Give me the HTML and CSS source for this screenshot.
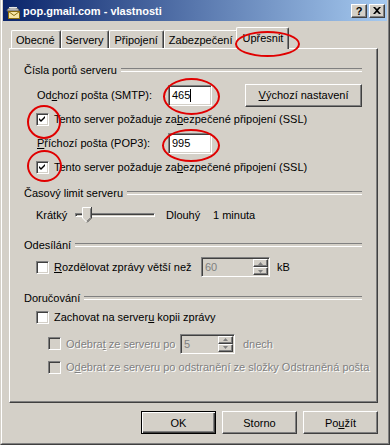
FILE: index.html
```html
<!DOCTYPE html>
<html>
<head>
    <meta charset="UTF-8">
    <title>pop.gmail.com - vlastnosti</title>
    <link rel="stylesheet" href="styles.css">
</head>
<body>
<div class="window">
    <div class="frame">
        <!-- titulek okna -->
        <div class="titlebar">
            <svg class="app-icon" width="16" height="16" viewBox="0 0 16 16">
                <path d="M2 8 C2 3 14 3 14 8 Z" fill="#b8b8b8" stroke="#6a6a6a"/>
                <path d="M4 4.5 H12" stroke="#e8e8e8"/>
                <rect x="3.5" y="8.5" width="11" height="7" fill="#f6e7a6" stroke="#8a6d10"/>
                <path d="M3.5 8.5 L9 12.5 L14.5 8.5" fill="none" stroke="#8a6d10"/>
            </svg>
            <span class="title">pop.gmail.com - vlastnosti</span>
            <span class="caption-btns">
                <span class="cbtn">?</span>
                <span class="cbtn">
                    <svg width="8" height="7" viewBox="0 0 8 7">
                        <path d="M0 0 L2 0 L4 2 L6 0 L8 0 L5 3.5 L8 7 L6 7 L4 5 L2 7 L0 7 L3 3.5 Z" fill="#000"/>
                    </svg>
                </span>
            </span>
        </div>

        <div class="content">
            <!-- zalozky -->
            <div class="tabs">
                <div class="tab">Obecné</div>
                <div class="tab">Servery</div>
                <div class="tab">Připojení</div>
                <div class="tab">Zabezpečení</div>
                <div class="tab active mark mark-tab">Upřesnit</div>
            </div>

            <div class="panel">
                <div class="group ports">
                    <div class="group-title">Čísla portů serveru</div>
                    <div class="row">
                        <span class="port-label">Od<u>c</u>hozí pošta (SMTP):</span>
                        <span class="mark mark-smtp"><span class="edit">465<i class="caret"></i></span></span>
                        <button class="btn defaults"><u>V</u>ýchozí nastavení</button>
                    </div>
                    <div class="row">
                        <span class="check checked mark mark-cb1"><svg width="9" height="9" viewBox="0 0 9 9"><path d="M1 3 L3 5 L7 1 L7 3 L3 7 L1 5 Z"/></svg></span>
                        <span class="cb-text">Tento server požaduje za<u>b</u>ezpečené připojení (SSL)</span>
                    </div>
                    <div class="row">
                        <span class="port-label"><u>P</u>říchozí pošta (POP3):</span>
                        <span class="mark mark-pop"><span class="edit">995</span></span>
                    </div>
                    <div class="row">
                        <span class="check checked mark mark-cb2"><svg width="9" height="9" viewBox="0 0 9 9"><path d="M1 3 L3 5 L7 1 L7 3 L3 7 L1 5 Z"/></svg></span>
                        <span class="cb-text">Tento server požaduje za<u>b</u>ezpečené připojení (SSL)</span>
                    </div>
                </div>

                <div class="group timeout">
                    <div class="group-title">Časový limit serveru</div>
                    <div class="row">
                        <span class="short-label">Krátký</span>
                        <span class="slider">
                            <span class="track"></span>
                            <svg class="thumb" width="10" height="16" viewBox="0 0 10 16">
                                <path d="M0.5 0.5 H9.5 V11 L5 15.5 L0.5 11 Z" fill="#d4d0c8"/>
                                <path d="M0.5 11 V0.5 H9" fill="none" stroke="#fff"/>
                                <path d="M0.5 11 L5 15.5" fill="none" stroke="#fff"/>
                                <path d="M9.5 0 V11 L5 15.5" fill="none" stroke="#404040"/>
                                <path d="M8.5 1.5 V10.6 L5 14.1" fill="none" stroke="#808080"/>
                            </svg>
                        </span>
                        <span class="long-label">Dlouhý</span>
                        <span>1 minuta</span>
                    </div>
                </div>

                <div class="group sending">
                    <div class="group-title">Odesílání</div>
                    <div class="row">
                        <span class="check"></span>
                        <span class="cb-text split"><u>R</u>ozdělovat zprávy větší než</span>
                        <span class="spin wide">
                            <span class="spin-value">60</span>
                            <span class="spin-btns">
                                <span class="sbtn"><svg width="5" height="3" viewBox="0 0 5 3"><path d="M2.5 0 L5 3 H0 Z" fill="#808080"/></svg></span>
                                <span class="sbtn"><svg width="5" height="3" viewBox="0 0 5 3"><path d="M0 0 H5 L2.5 3 Z" fill="#808080"/></svg></span>
                            </span>
                        </span>
                        <span class="unit">kB</span>
                    </div>
                </div>

                <div class="group delivery">
                    <div class="group-title">Doručování</div>
                    <div class="row">
                        <span class="check"></span>
                        <span class="cb-text">Zachovat na server<u>u</u> kopii zprávy</span>
                    </div>
                    <div class="row sub short">
                        <span class="check disabled"></span>
                        <span class="cb-text off days">Odebra<u>t</u> ze serveru po</span>
                        <span class="spin narrow">
                            <span class="spin-value">5</span>
                            <span class="spin-btns">
                                <span class="sbtn"><svg width="5" height="3" viewBox="0 0 5 3"><path d="M2.5 0 L5 3 H0 Z" fill="#808080"/></svg></span>
                                <span class="sbtn"><svg width="5" height="3" viewBox="0 0 5 3"><path d="M0 0 H5 L2.5 3 Z" fill="#808080"/></svg></span>
                            </span>
                        </span>
                        <span class="unit off">dnech</span>
                    </div>
                    <div class="row sub">
                        <span class="check disabled"></span>
                        <span class="cb-text off">O<u>d</u>ebrat ze serveru po odstranění ze složky Odstraněná pošta</span>
                    </div>
                </div>
            </div>

            <!-- tlacitka dole -->
            <div class="actions">
                <button class="btn default">OK</button>
                <button class="btn">Storno</button>
                <button class="btn">Po<u>u</u>žít</button>
            </div>
        </div>
    </div>
</div>
</body>
</html>
```

FILE: styles.css
```css
* {
    margin: 0;
    padding: 0;
    box-sizing: border-box;
}

body {
    font: 11px "Liberation Sans", Arial, sans-serif;
    color: #000;
    background-color: #d4d0c8;
}

/*okno s klasickym 3D okrajem*/
.window {
    width: 390px;
    height: 445px;
    background-color: #d4d0c8;
    border-style: solid;
    border-width: 0 1px 1px 1px;
    border-color: #d4d0c8 #404040 #404040 #d4d0c8;
}

.frame {
    height: 100%;
    border-style: solid;
    border-width: 0 1px 1px 1px;
    border-color: #fff #808080 #808080 #fff;
    padding: 0 1px 1px 1px;
}

.titlebar {
    height: 21px;
    display: flex;
    align-items: center;
    padding: 0 2px 0 2px;
    background: linear-gradient(to right, #0a246a, #a6caf0);
}

.app-icon {
    margin-right: 2px;
}

.title {
    color: #fff;
    font-weight: bold;
}

.caption-btns {
    margin-left: auto;
    display: flex;
    gap: 2px;
}

.cbtn {
    width: 16px;
    height: 14px;
    display: flex;
    align-items: center;
    justify-content: center;
    font-weight: bold;
    font-size: 11px;
    background-color: #d4d0c8;
    border: 1px solid;
    border-color: #fff #404040 #404040 #fff;
    box-shadow: inset -1px -1px #808080;
}

.content {
    padding: 6px 9px 0 6px;
}

/*zalozky*/
.tabs {
    display: flex;
    align-items: flex-end;
    height: 21px;
    padding-left: 2px;
}

.tab {
    height: 18px;
    padding: 0 5px 0 4px;
    display: flex;
    align-items: center;
    border-style: solid;
    border-width: 1px 1px 0 1px;
    border-color: #fff #404040 #fff #fff;
    box-shadow: inset -1px 0 #808080;
    border-radius: 2px 2px 0 0;
}

.tab.active {
    height: 22px;
    margin: 0 -2px -1px -2px;
    padding: 0 5px 2px 5px;
    background-color: #d4d0c8;
    position: relative;
    z-index: 1;
}

.panel {
    height: 355px;
    padding: 0 15px 0 14px;
    border: 1px solid;
    border-color: #fff #404040 #404040 #fff;
    box-shadow: inset -1px -1px #808080;
}

/*cervene krouzky*/
.mark {
    position: relative;
}

.mark::after {
    content: "";
    position: absolute;
    border: 2px solid #e00000;
    border-radius: 50%;
    z-index: 2;
}

.mark-tab::after {
    left: -2px;
    top: 3px;
    width: 61px;
    height: 22px;
}

.mark-smtp::after {
    left: -5px;
    top: -7px;
    width: 53px;
    height: 33px;
}

.mark-pop::after {
    left: -6px;
    top: -4px;
    width: 54px;
    height: 29px;
}

.mark-cb1::after {
    left: -10px;
    top: -9px;
    width: 30px;
    height: 30px;
}

.mark-cb2::after {
    left: -10px;
    top: -12px;
    width: 31px;
    height: 28px;
}

/*skupiny*/
.group-title {
    height: 14px;
    display: flex;
    align-items: center;
}

.group-title::after {
    content: "";
    flex: 1;
    height: 2px;
    margin-left: 4px;
    border-top: 1px solid #808080;
    border-bottom: 1px solid #fff;
}

.ports {
    margin-top: 14px;
}

.timeout {
    margin-top: 7px;
}

.sending {
    margin-top: 11px;
}

.delivery {
    margin-top: 12px;
}

.row {
    height: 24px;
    display: flex;
    align-items: center;
    padding-left: 12px;
}

.group-title + .row {
    margin-top: 3px;
}

.ports .group-title + .row {
    margin-top: 6px;
}

.delivery .group-title + .row {
    margin-top: 0;
}

.row.sub {
    padding-left: 24px;
}

.row.short {
    height: 23px;
    margin-top: 3px;
}

.port-label {
    width: 131px;
    margin-left: 1px;
}

.edit {
    display: flex;
    align-items: center;
    width: 44px;
    height: 21px;
    padding-left: 3px;
    background-color: #fff;
    border: 1px solid;
    border-color: #808080 #fff #fff #808080;
    box-shadow: inset 1px 1px #404040, inset -1px -1px #d4d0c8;
}

.caret {
    width: 1px;
    height: 13px;
    background-color: #000;
}

.btn {
    height: 23px;
    width: 75px;
    font: inherit;
    color: #000;
    background-color: #d4d0c8;
    border: 1px solid;
    border-color: #fff #404040 #404040 #fff;
    box-shadow: inset -1px -1px #808080;
}

.btn.defaults {
    width: 117px;
    margin-left: 33px;
}

.btn.default {
    border-color: #000;
    box-shadow: inset 1px 1px #fff, inset -1px -1px #404040, inset -2px -2px #808080;
}

/*zaskrtavaci policka*/
.check {
    width: 13px;
    height: 13px;
    flex: none;
    display: flex;
    align-items: center;
    justify-content: center;
    background-color: #fff;
    border: 1px solid;
    border-color: #808080 #fff #fff #808080;
    box-shadow: inset 1px 1px #404040, inset -1px -1px #d4d0c8;
}

.check.disabled {
    background-color: #d4d0c8;
}

.cb-text {
    margin-left: 5px;
    white-space: nowrap;
}

.cb-text.split {
    width: 147px;
}

.cb-text.days {
    width: 114px;
}

.off {
    color: #808080;
    text-shadow: 1px 1px #fff;
}

/*posuvnik*/
.short-label {
    width: 39px;
}

.slider {
    position: relative;
    width: 80px;
    height: 16px;
    display: flex;
    align-items: center;
}

.track {
    width: 100%;
    height: 4px;
    border: 1px solid;
    border-color: #808080 #fff #fff #808080;
    box-shadow: inset 1px 1px #404040;
}

.thumb {
    position: absolute;
    left: 7px;
    top: 0;
}

.long-label {
    margin-left: 11px;
    width: 47px;
}

/*spin pole*/
.spin {
    height: 20px;
    display: flex;
    background-color: #d4d0c8;
    border: 1px solid;
    border-color: #808080 #fff #fff #808080;
    box-shadow: inset 1px 1px #404040, inset -1px -1px #d4d0c8;
    padding: 1px 1px 1px 1px;
}

.spin.wide {
    width: 69px;
}

.spin.narrow {
    width: 55px;
}

.spin-value {
    flex: 1;
    color: #808080;
    padding-left: 2px;
    display: flex;
    align-items: center;
}

.spin-btns {
    width: 15px;
    display: flex;
    flex-direction: column;
}

.sbtn {
    flex: 1;
    display: flex;
    align-items: center;
    justify-content: center;
    border: 1px solid;
    border-color: #fff #404040 #404040 #fff;
    box-shadow: inset -1px -1px #808080;
}

.unit {
    margin-left: 7px;
}

.unit.off {
    margin-left: 8px;
}

.actions {
    display: flex;
    justify-content: flex-end;
    gap: 6px;
    margin-top: 8px;
}
```
